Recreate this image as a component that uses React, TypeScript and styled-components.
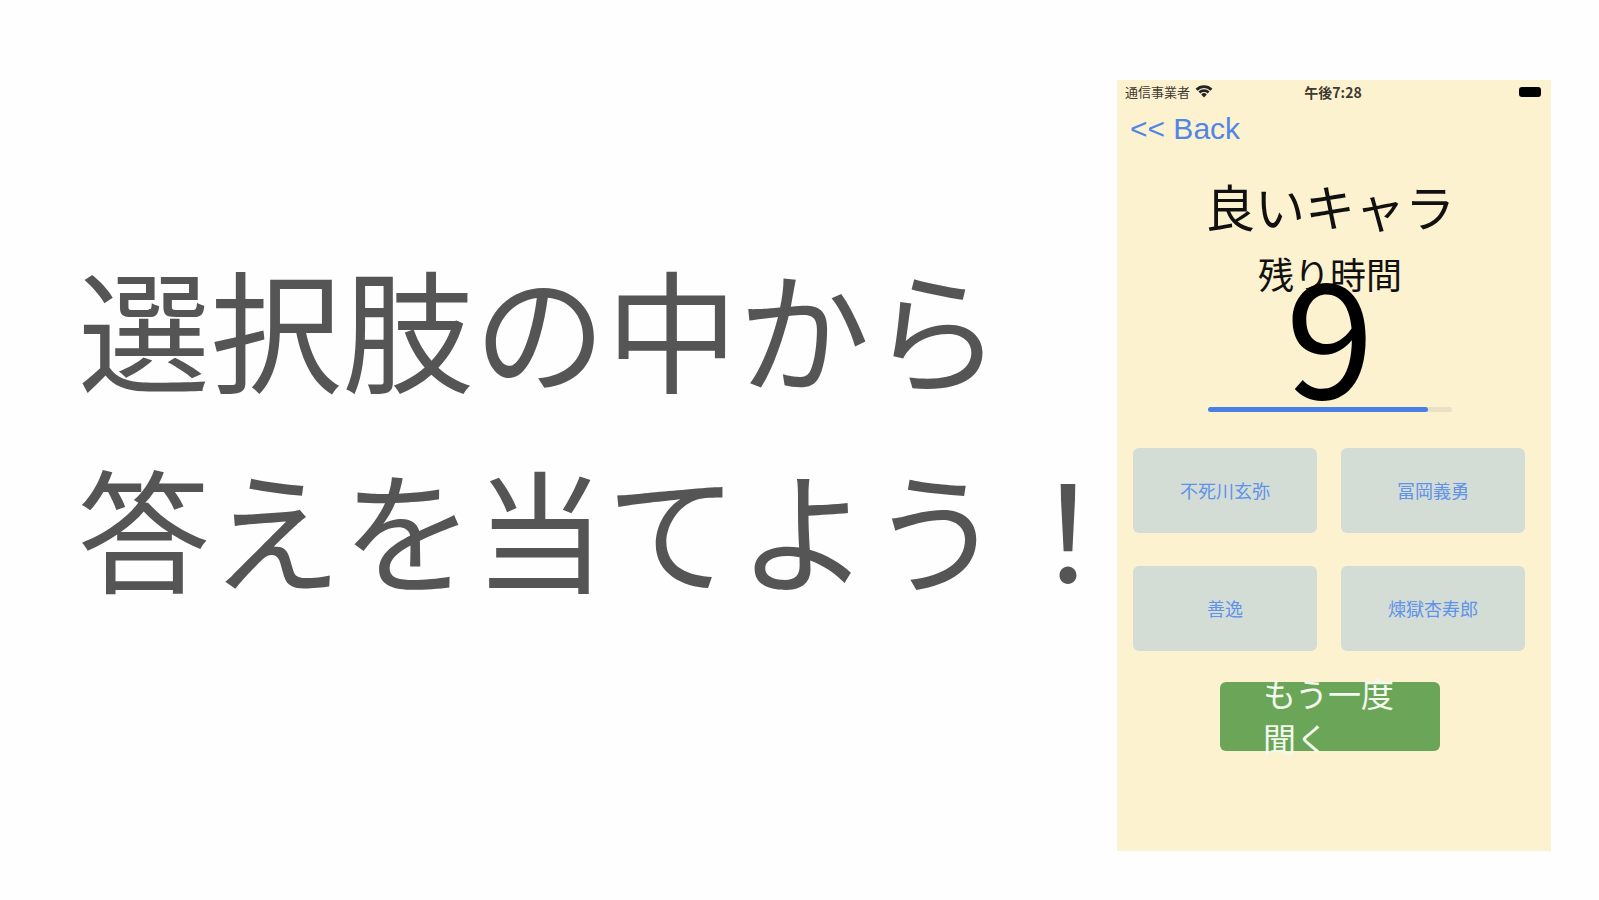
import React from "react";
import styled, { createGlobalStyle } from "styled-components";

const GlobalStyle = createGlobalStyle`
  *, *::before, *::after { box-sizing: border-box; }
  body {
    margin: 0;
    background: #fefefe;
    font-family: "Noto Sans CJK JP", sans-serif;
  }
`;

const Page = styled.main`
  display: flex;
  align-items: center;
  justify-content: space-between;
  min-height: 100vh;
  padding: 16px 48px 16px 78px;
  overflow: hidden;
`;

const Headline = styled.h1`
  flex: 1 1 0;
  min-width: 0;
  margin: 0 0 48px;
  color: #555;
  font-size: 132px;
  font-weight: 400;
  line-height: 200px;
  white-space: nowrap;
`;

const Device = styled.section`
  flex: 0 0 434px;
  display: flex;
  flex-direction: column;
  margin-top: 30px;
  padding-bottom: 100px;
  background: #fdf2d0;
  color: #111;
`;

const StatusBar = styled.header`
  display: grid;
  grid-template-columns: 1fr auto 1fr;
  align-items: center;
  height: 24px;
  padding: 0 10px 0 8px;
  color: #3d3a31;
  font-size: 13px;
  line-height: 24px;
`;

const Carrier = styled.span`
  display: flex;
  align-items: center;
  gap: 5px;
`;

const Clock = styled.time`
  font-size: 14px;
  font-weight: 700;
`;

const Battery = styled.span`
  justify-self: end;
  width: 22px;
  height: 10px;
  border-radius: 3px;
  background: #000;
`;

const BackLink = styled.a`
  align-self: flex-start;
  margin: 7px 0 0 13px;
  color: #4f86e8;
  font-family: "Liberation Sans", sans-serif;
  font-size: 30px;
  line-height: 36px;
  text-decoration: none;
`;

const Question = styled.h2`
  margin: 30px 0 0;
  padding-right: 8px;
  font-size: 50px;
  font-weight: 400;
  line-height: 56px;
  text-align: center;
`;

const Timer = styled.div`
  display: flex;
  flex-direction: column;
  align-items: center;
  margin-top: 20px;
  padding-right: 8px;
`;

const TimerLabel = styled.label`
  font-size: 36px;
  line-height: 40px;
`;

const Seconds = styled.output`
  margin-top: -24px;
  color: #000;
  font-size: 160px;
  line-height: 120px;
`;

const TimeBar = styled.progress`
  appearance: none;
  width: 244px;
  height: 5px;
  margin-top: 18px;
  border: 0;

  &::-webkit-progress-bar {
    border-radius: 3px;
    background: #e9e1c6;
  }
  &::-webkit-progress-value {
    border-radius: 3px;
    background: #4a80e4;
  }
`;

const Choices = styled.div`
  display: grid;
  grid-template-columns: 1fr 1fr;
  gap: 33px 24px;
  margin-top: 36px;
  padding: 0 26px 0 16px;
`;

const ChoiceButton = styled.button`
  height: 85px;
  padding: 0;
  border: 0;
  border-radius: 6px;
  background: #d3ddd5;
  color: #5f92ea;
  font-family: inherit;
  font-size: 18px;
`;

const ListenButton = styled.button`
  align-self: center;
  display: flex;
  align-items: center;
  width: 220px;
  height: 69px;
  margin: 31px 8px 0 0;
  padding: 0 43px;
  border: 0;
  border-radius: 6px;
  background: #6ba557;
  color: #f3faee;
  font-family: inherit;
  font-size: 33px;
  line-height: 45px;
  text-align: left;
`;

const choices = ["不死川玄弥", "冨岡義勇", "善逸", "煉獄杏寿郎"];

const WifiIcon = () => (
  <svg width="18" height="13" viewBox="0 0 18 13" aria-hidden="true">
    <path d="M9 12.5 6.2 9.4a4 4 0 0 1 5.6 0Z" fill="#222" />
    <path d="M4.4 7.5a6.6 6.6 0 0 1 9.2 0M1.6 4.7a10.5 10.5 0 0 1 14.8 0" fill="none" stroke="#222" strokeWidth="2.8" />
  </svg>
);

export default function App() {
  return (
    <>
      <GlobalStyle />
      <Page>
        <Headline>
          選択肢の中から
          <br />
          答えを当てよう！
        </Headline>
        <Device>
          <StatusBar>
            <Carrier>
              通信事業者
              <WifiIcon />
            </Carrier>
            <Clock>午後7:28</Clock>
            <Battery />
          </StatusBar>
          <BackLink href="#back">&lt;&lt; Back</BackLink>
          <Question>良いキャラ</Question>
          <Timer>
            <TimerLabel htmlFor="time-left">残り時間</TimerLabel>
            <Seconds>9</Seconds>
            <TimeBar id="time-left" value={9} max={10} />
          </Timer>
          <Choices>
            {choices.map((name) => (
              <ChoiceButton key={name} type="button">
                {name}
              </ChoiceButton>
            ))}
          </Choices>
          <ListenButton type="button">もう一度聞く</ListenButton>
        </Device>
      </Page>
    </>
  );
}
